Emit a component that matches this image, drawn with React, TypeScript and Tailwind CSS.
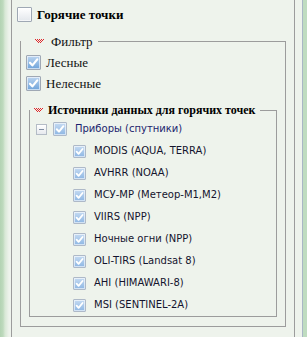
import React from "react";

const serif = { fontFamily: '"Liberation Serif", "DejaVu Serif", serif' };
const sans = { fontFamily: '"DejaVu Sans", Verdana, sans-serif' };

function Dots() {
  // little red dotted "collapse" triangle used in the legends
  const pts: [number, number][] = [];
  for (let r = 0; r < 4; r++) {
    for (let c = r; c <= 8 - r; c += 2) pts.push([c, r]);
  }
  return (
    <svg width="9" height="4" viewBox="0 0 9 4" className="shrink-0">
      {pts.map(([x, y]) => (
        <rect key={`${x}-${y}`} x={x} y={y} width="1" height="1" fill="#e0262a" />
      ))}
    </svg>
  );
}

function Check({ checked, size = 15, faded = false }: { checked: boolean; size?: number; faded?: boolean }) {
  const fill = !checked
    ? "bg-[linear-gradient(#ffffff,#e3e7ec)]"
    : faded
      ? "bg-[linear-gradient(#c6dbf2,#8db6e3)]"
      : "bg-[linear-gradient(#bcd5f0,#6fa3da)]";
  return (
    <span
      className={`flex shrink-0 items-center justify-center rounded-[1px] border ${
        faded ? "border-[#aeb9c8]" : "border-[#9fa8b4]"
      } ${fill} shadow-[inset_0_0_0_1px_rgba(255,255,255,0.6)]`}
      style={{ width: size, height: size }}
    >
      {checked && (
        <svg width={size - 4} height={size - 4} viewBox="0 0 10 10">
          <path d="M1.8 5.2 L4 7.6 L8.4 2.2" fill="none" stroke="#ffffff" strokeWidth="2" strokeLinecap="round" strokeLinejoin="round" />
        </svg>
      )}
    </span>
  );
}

function Minus() {
  return (
    <span className="flex h-[11px] w-[11px] shrink-0 items-center justify-center border border-[#b4bcc6] bg-[linear-gradient(#ffffff,#e6e9ee)]">
      <span className="h-px w-[5px] bg-[#7f8ea3]" />
    </span>
  );
}

const sources = [
  "MODIS (AQUA, TERRA)",
  "AVHRR (NOAA)",
  "МСУ-МР (Метеор-М1,М2)",
  "VIIRS (NPP)",
  "Ночные огни (NPP)",
  "OLI-TIRS (Landsat 8)",
  "AHI (HIMAWARI-8)",
  "MSI (SENTINEL-2A)",
];

export default function App() {
  return (
    <div className="flex h-[337px] w-[307px] overflow-hidden bg-[#eef3ec]">
      <div className="w-[11px] shrink-0 bg-[linear-gradient(to_right,#b3d3b3_0px,#bedabd_3px,#d8e8d6_5px,#eef3ec_9px)]" />

      <div className="w-[284px] shrink-0 border-x border-[#9c9c9c] pl-[5px] pr-[8px] pt-[7px]">
        <div className="flex h-[15px] items-center gap-[5px]">
          <Check checked={false} />
          <span className="text-[13px] font-bold leading-none text-black" style={serif}>
            Горячие точки
          </span>
        </div>

        <fieldset className="ml-[3px] mt-[12px] border border-[#9c9c9c]">
          <legend className="flex h-[14px] items-center gap-[7px] whitespace-nowrap pl-[14px] pr-[5px]">
            <Dots />
            <span className="text-[13px] leading-none text-[#111]" style={serif}>
              Фильтр
            </span>
          </legend>

          <div className="pb-[9px] pl-[5px] pr-[8px] pt-[4px]">
            {["Лесные", "Нелесные"].map((t) => (
              <div key={t} className="flex h-[21px] items-center gap-[5px]">
                <Check checked />
                <span className="text-[13px] leading-none text-[#111]" style={serif}>
                  {t}
                </span>
              </div>
            ))}

            <fieldset className="ml-[3px] mt-[9px] border border-[#9c9c9c]">
              <legend className="flex h-[14px] items-center gap-[5px] whitespace-nowrap pl-[4px] pr-[4px]">
                <Dots />
                <span className="text-[12px] font-bold leading-none text-black" style={serif}>
                  Источники данных для горячих точек
                </span>
              </legend>

              <div className="pl-[6px] pt-px">
                <div className="flex h-[22px] items-center">
                  <Minus />
                  <span className="ml-[6px]">
                    <Check checked size={14} faded />
                  </span>
                  <span className="ml-[8px] whitespace-nowrap text-[10px] leading-none text-[#1b1f6e]" style={sans}>
                    Приборы (спутники)
                  </span>
                </div>
                {sources.map((s) => (
                  <div key={s} className="flex h-[22px] items-center pl-[37px]">
                    <Check checked size={13} faded />
                    <span className="ml-[8px] whitespace-nowrap text-[10px] leading-none text-[#14142e]" style={sans}>
                      {s}
                    </span>
                  </div>
                ))}
              </div>
            </fieldset>
          </div>
        </fieldset>
      </div>

      <div className="w-[7px] shrink-0" />
      <div className="w-px shrink-0 bg-[#a9b6c6]" />
      <div className="w-[4px] shrink-0 bg-[#bfdcc0]" />
    </div>
  );
}
